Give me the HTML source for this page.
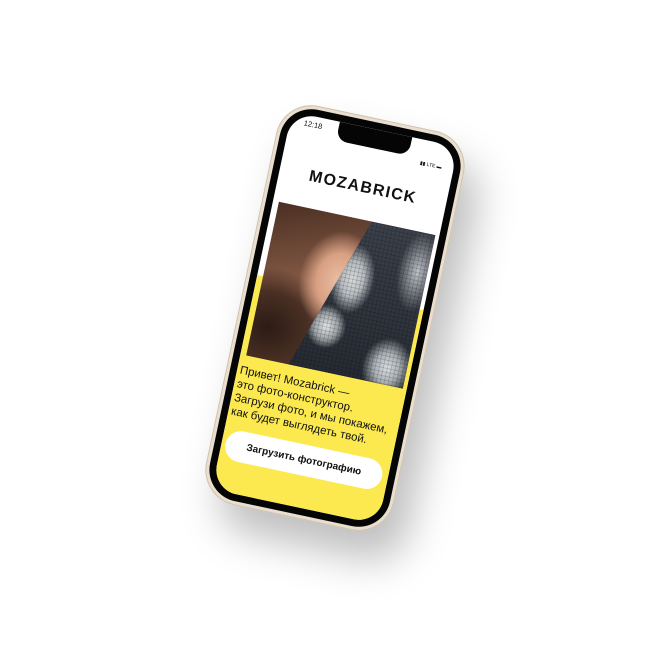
<!DOCTYPE html>
<html><head><meta charset="utf-8"><style>
html,body{margin:0;padding:0;background:#fff;width:645px;height:645px;overflow:hidden}
.phone{position:absolute;left:239px;top:114px;width:192px;height:408px;border-radius:36px;transform:rotate(12deg);background:#eadfcf;box-shadow:inset 0 0 0 1px #cfc2b0,20px 26px 40px rgba(0,0,0,.25);}
.bezel{position:absolute;left:4px;top:4px;right:4px;bottom:4px;border-radius:32px;background:#050505}
.screen{position:absolute;left:11px;top:11px;width:170px;height:386px;border-radius:25px;background:#fff;overflow:hidden;font-family:"Liberation Sans","Noto Sans CJK SC",sans-serif}
.yellow{position:absolute;left:0;top:167px;width:100%;bottom:0;background:#fbe94f}
.notch{position:absolute;left:49px;top:0;width:74px;height:19px;background:#050505;border-radius:0 0 11px 11px}
.time{position:absolute;left:14px;top:4px;font-size:7.5px;color:#111}
.stat{position:absolute;right:12px;top:21px;font-size:5px;color:#111}
.logo{position:absolute;left:0;width:100%;top:51px;text-align:center;font-weight:bold;font-size:16px;letter-spacing:1.3px;color:#111}
.photo{position:absolute;left:6px;top:91px;width:160px;height:157px;overflow:hidden;
background:radial-gradient(ellipse 40px 50px at 75px 65px,#eabfa4 0%,#d9a083 55%,rgba(160,100,70,0) 100%),
radial-gradient(ellipse 70px 60px at 15px 125px,#2c1b15 0%,#4a3024 60%,rgba(0,0,0,0) 100%),
linear-gradient(160deg,#4a2f23 0%,#8a5e48 45%,#3b261d 100%)}
.mosaic{position:absolute;left:0;top:0;width:160px;height:157px;clip-path:polygon(95px 0,160px 0,160px 157px,43px 157px);
background:
repeating-linear-gradient(90deg,rgba(0,0,0,.15) 0 1px,transparent 1px 4px),
repeating-linear-gradient(0deg,rgba(0,0,0,.15) 0 1px,transparent 1px 4px),
radial-gradient(ellipse 22px 35px at 88px 60px,#d8dadc 0%,#b8bcc0 50%,rgba(0,0,0,0) 100%),
radial-gradient(ellipse 20px 22px at 72px 112px,#e4e5e6 0%,#9ca1a6 60%,rgba(0,0,0,0) 100%),
radial-gradient(ellipse 25px 30px at 140px 140px,#dcdde0 0%,#aab0b5 50%,rgba(0,0,0,0) 100%),
radial-gradient(ellipse 20px 40px at 150px 40px,#bfc3c8 0%,rgba(0,0,0,0) 100%),
linear-gradient(180deg,#3b414b,#262b33)}
.txt{position:absolute;left:3px;top:257px;font-size:11.5px;line-height:14px;color:#111;white-space:nowrap}
.btn{position:absolute;left:4px;top:323px;width:160px;height:31px;border-radius:16px;background:#fff;text-align:center;line-height:31px;font-size:10px;font-weight:bold;color:#111}
</style></head><body>
<div class="phone"><div class="bezel"></div>
<div class="screen">
<div class="yellow"></div>
<div class="notch"></div>
<div class="time">12:18</div>
<div class="stat">▮▮ LTE ▬</div>
<div class="logo">MOZABRICK</div>
<div class="photo"><div class="mosaic"></div></div>
<div class="txt">Привет! Mozabrick —<br>это фото-конструктор.<br>Загрузи фото, и мы покажем,<br>как будет выглядеть твой.</div>
<div class="btn">Загрузить фотографию</div>
</div></div>
</body></html>
